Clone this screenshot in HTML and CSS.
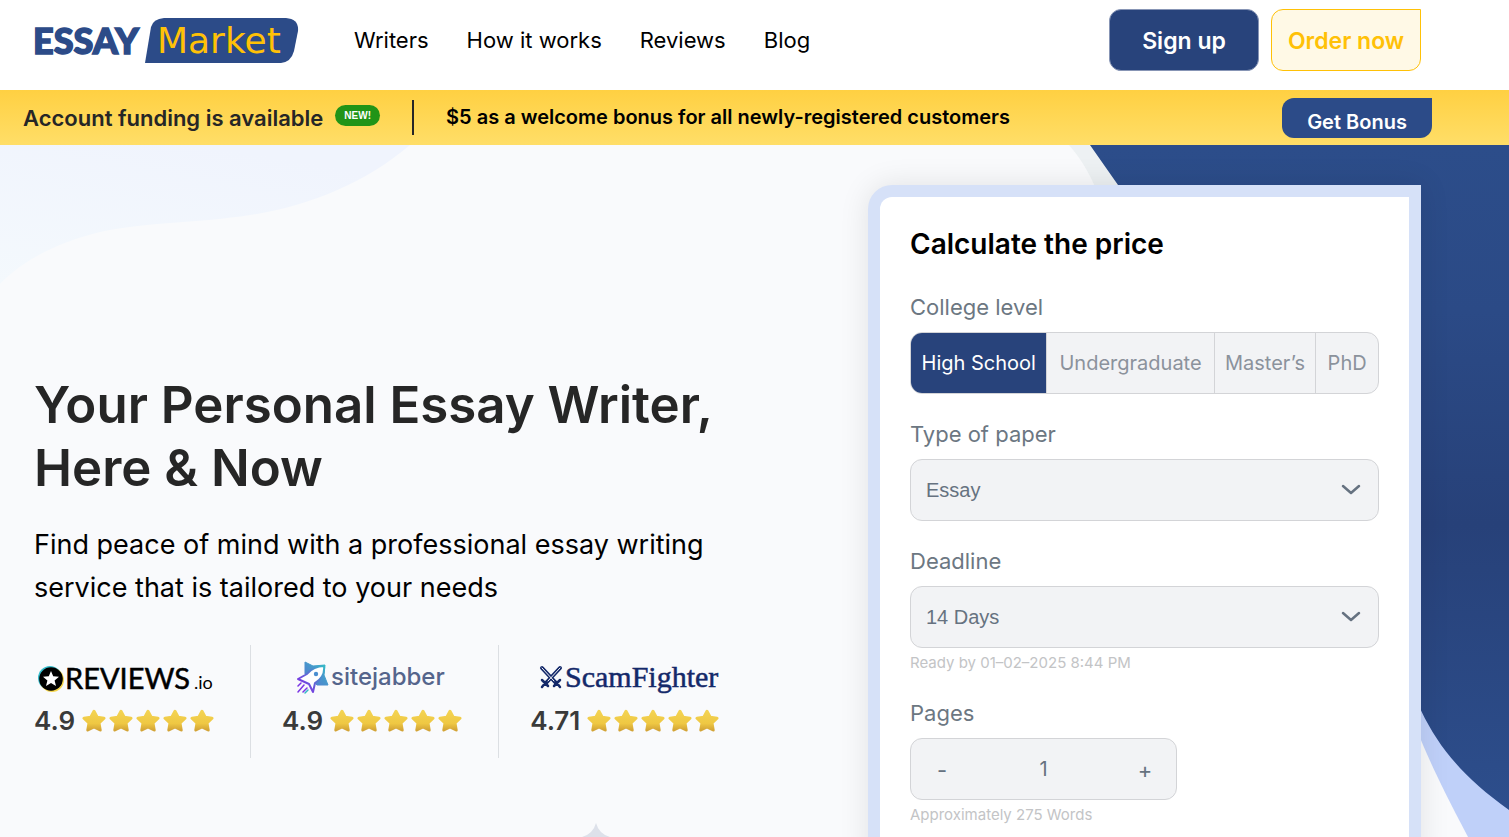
FILE: index.html
```html
<!DOCTYPE html>
<html lang="en">
<head>
    <meta charset="UTF-8">
    <meta name="viewport" content="width=device-width, initial-scale=1.0">
    <title>Essay Market</title>
    <link rel="stylesheet" href="styles.css">
</head>
<body>
    <svg class="symbols" aria-hidden="true">
        <defs>
            <linearGradient id="star-fill" x1="0" y1="0" x2="0" y2="1">
                <stop offset="0" stop-color="#f3d352"/>
                <stop offset="0.65" stop-color="#efc843"/>
                <stop offset="1" stop-color="#d3a437"/>
            </linearGradient>
        </defs>
        <symbol id="star" viewBox="0 0 24 24">
            <path d="M12 2.2l3.200 6 6.800 1-5 4.800 1.200 7-6.200-3-6.200 3 1.200-7L2 9.200l6.800-1z" fill="url(#star-fill)" stroke="url(#star-fill)" stroke-width="3" stroke-linejoin="round"/>
        </symbol>
    </svg>

    <header class="header">
        <a class="logo" href="#" aria-label="Essay Market">
            <svg width="264" height="46" viewBox="0 0 264 46">
                <path d="M130 1H252Q265 2 264 14L260 34Q257 45 247 46H111L117 10Q119 2 130 1Z" fill="#2c4b88"/>
                <text class="logo-essay" x="-1" y="37">ESSAY</text>
                <text class="logo-market" x="123" y="36">Market</text>
            </svg>
        </a>
        <nav class="nav">
            <a href="#">Writers</a>
            <a href="#">How it works</a>
            <a href="#">Reviews</a>
            <a href="#">Blog</a>
        </nav>
        <div class="header-buttons">
            <button class="btn btn-signup">Sign up</button>
            <button class="btn btn-order">Order now</button>
        </div>
    </header>

    <div class="bonus-bar">
        <a class="funding" href="#">Account funding is available</a>
        <span class="new-badge">NEW!</span>
        <p class="bonus-text">$5 as a welcome bonus for all newly-registered customers</p>
        <button class="btn-bonus">Get Bonus</button>
    </div>

    <main class="hero">
        <!-- background waves -->
        <svg class="wave wave-left" width="420" height="140" viewBox="0 0 420 140" aria-hidden="true">
            <defs>
                <linearGradient id="wave-fill" x1="0" y1="1" x2="0.5" y2="0">
                    <stop offset="0" stop-color="#f4f9fd"/>
                    <stop offset="1" stop-color="#f0f4fd"/>
                </linearGradient>
            </defs>
            <path d="M0 0H410C365 38 310 61 250 70C200 78 145 77 100 87C60 97 25 113 0 139Z" fill="url(#wave-fill)"/>
        </svg>
        <svg class="wave wave-right" width="441" height="692" viewBox="0 0 441 692" aria-hidden="true">
            <defs>
                <linearGradient id="blob-fill" x1="0" y1="0" x2="0" y2="1">
                    <stop offset="0" stop-color="#2c4d8a"/>
                    <stop offset="0.25" stop-color="#2b4a86"/>
                    <stop offset="0.57" stop-color="#274179"/>
                    <stop offset="1" stop-color="#2d4e8c"/>
                </linearGradient>
            </defs>
            <path d="M1 0C18 20 25 35 34 60H70L30 0Z" fill="#edf1f3"/>
            <path d="M340 560C350 590 362 620 400 692H441V600Z" fill="#bfd0f9"/>
            <path d="M22 0L50 40L330 500C350 574 375 618 441 665V0Z" fill="url(#blob-fill)"/>
        </svg>
        <svg class="wave sparkle" width="28" height="28" viewBox="0 0 28 28" aria-hidden="true">
            <path d="M14 0Q17 11 28 14Q17 17 14 28Q11 17 0 14Q11 11 14 0Z" fill="#dde1ea"/>
        </svg>

        <section class="intro">
            <h1>Your Personal Essay Writer, Here &amp; Now</h1>
            <p class="lead">Find peace of mind with a professional essay writing service that is tailored to your needs</p>
            <div class="ratings">
                <div class="rating">
                    <a class="rating-logo" href="#" aria-label="REVIEWS.io">
                        <svg width="176" height="34" viewBox="0 0 176 34">
                            <circle cx="12" cy="17" r="12" fill="#35bccb"/>
                            <circle cx="14" cy="19" r="12" fill="#f5d54a"/>
                            <circle cx="13" cy="18" r="11.800" fill="#000"/>
                            <path d="M13 10l2.200 5.300 5.800.4-4.400 3.700 1.400 5.600-5-3.100-5 3.100 1.400-5.600L5 15.700l5.800-.4z" fill="#fff"/>
                            <text class="reviews-name" x="27" y="28">REVIEWS</text>
                            <text class="reviews-io" x="156" y="28">.io</text>
                        </svg>
                    </a>
                    <div class="score">
                        <span>4.9</span>
                        <div class="stars">
                            <svg><use href="#star"/></svg><svg><use href="#star"/></svg><svg><use href="#star"/></svg><svg><use href="#star"/></svg><svg><use href="#star"/></svg>
                        </div>
                    </div>
                </div>
                <div class="rating">
                    <a class="rating-logo" href="#" aria-label="sitejabber">
                        <svg width="150" height="34" viewBox="0 0 150 34">
                            <defs>
                                <linearGradient id="jab-star" x1="1" y1="0" x2="0" y2="1">
                                    <stop offset="0" stop-color="#35b9c6"/>
                                    <stop offset="1" stop-color="#5a72d2"/>
                                </linearGradient>
                                <linearGradient id="jab-rocket" x1="1" y1="0" x2="0.2" y2="0.8">
                                    <stop offset="0" stop-color="#35b9c6"/>
                                    <stop offset="0.55" stop-color="#5a72d2"/>
                                    <stop offset="1" stop-color="#7b35e4"/>
                                </linearGradient>
                            </defs>
                            <path d="M8 1L16 5L28 4L27 14L31 24L20 24L8 13Z" fill="url(#jab-star)" stroke="url(#jab-star)" stroke-linejoin="round"/>
                            <path d="M27 5C28 13 23 19 18 22L16 31L12 23L1 18L10 13C14 8 20 5 27 5Z" fill="#fff" stroke="url(#jab-rocket)" stroke-width="2" stroke-linejoin="round"/>
                            <circle cx="19" cy="13" r="2.200" fill="#4b8fd0"/>
                            <path d="M4 22L1 25M7 24L1 31M10 27L6 31" stroke="#7b35e4" stroke-width="1.500" stroke-linecap="round"/>
                            <path d="M11 29L8 32" stroke="#35b9c6" stroke-width="1.500" stroke-linecap="round"/>
                            <text class="sitejabber-name" x="34" y="24">sitejabber</text>
                        </svg>
                    </a>
                    <div class="score">
                        <span>4.9</span>
                        <div class="stars">
                            <svg><use href="#star"/></svg><svg><use href="#star"/></svg><svg><use href="#star"/></svg><svg><use href="#star"/></svg><svg><use href="#star"/></svg>
                        </div>
                    </div>
                </div>
                <div class="rating">
                    <a class="rating-logo" href="#" aria-label="ScamFighter">
                        <svg width="180" height="34" viewBox="0 0 180 34">
                            <g fill="none" stroke="#14296a" stroke-linecap="round">
                                <path d="M3 7L17 22M21 7L7 22" stroke-width="4"/>
                                <path d="M3 7L15 20M21 7L9 20" stroke="#f9fafc" stroke-width="1"/>
                                <path d="M3 19L9 25M21 19L15 25M7 21L3 26M17 21L21 26" stroke-width="2.500"/>
                            </g>
                            <text class="scamfighter-name" x="26" y="26">ScamFighter</text>
                        </svg>
                    </a>
                    <div class="score">
                        <span>4.71</span>
                        <div class="stars">
                            <svg><use href="#star"/></svg><svg><use href="#star"/></svg><svg><use href="#star"/></svg><svg><use href="#star"/></svg><svg><use href="#star"/></svg>
                        </div>
                    </div>
                </div>
            </div>
        </section>

        <form class="calculator">
            <h2>Calculate the price</h2>

            <fieldset class="field">
                <legend>College level</legend>
                <div class="levels">
                    <input type="radio" name="level" id="level-school" checked>
                    <label for="level-school">High School</label>
                    <input type="radio" name="level" id="level-under">
                    <label for="level-under">Undergraduate</label>
                    <input type="radio" name="level" id="level-master">
                    <label for="level-master">Master’s</label>
                    <input type="radio" name="level" id="level-phd">
                    <label for="level-phd">PhD</label>
                </div>
            </fieldset>

            <div class="field">
                <label class="field-label" for="paper">Type of paper</label>
                <div class="select-wrap">
                    <select id="paper">
                        <option>Essay</option>
                    </select>
                    <svg class="chevron" width="20" height="12" viewBox="0 0 20 12"><path d="M2 2L10 9L18 2"/></svg>
                </div>
            </div>

            <div class="field">
                <label class="field-label" for="deadline">Deadline</label>
                <div class="select-wrap">
                    <select id="deadline">
                        <option>14 Days</option>
                    </select>
                    <svg class="chevron" width="20" height="12" viewBox="0 0 20 12"><path d="M2 2L10 9L18 2"/></svg>
                </div>
                <p class="note">Ready by 01–02–2025 8:44 PM</p>
            </div>

            <div class="field">
                <label class="field-label" for="pages">Pages</label>
                <div class="stepper">
                    <button type="button" id="minus">-</button>
                    <input type="text" id="pages" value="1">
                    <button type="button" id="plus">+</button>
                </div>
                <p class="note" id="words">Approximately 275 Words</p>
            </div>
        </form>
    </main>

    <script>
        const pagesInput = document.getElementById("pages");
        const wordsNote = document.getElementById("words");

        function setPages(count) {
            const pages = Math.max(1, count || 1);
            pagesInput.value = pages;
            wordsNote.textContent = `Approximately ${pages * 275} Words`;
        }

        document.getElementById("minus").addEventListener("click", () => setPages(parseInt(pagesInput.value, 10) - 1));
        document.getElementById("plus").addEventListener("click", () => setPages(parseInt(pagesInput.value, 10) + 1));
        pagesInput.addEventListener("change", () => setPages(parseInt(pagesInput.value, 10)));
    </script>
</body>
</html>
```
FILE: styles.css
```css
* {
    box-sizing: border-box;
}
body {
    margin: 0;
    min-height: 100vh;
    display: flex;
    flex-direction: column;
    font-family: Inter, "Open Sans", sans-serif;
    color: #000;
    background: #fff;
}
a {
    color: inherit;
    text-decoration: none;
}
button, input, select {
    font-family: inherit;
}
button {
    cursor: pointer;
}
h1, h2, p {
    margin: 0;
}
.symbols {
    position: absolute;
    width: 0;
    height: 0;
}

/* header */
.header {
    display: flex;
    align-items: center;
    height: 90px;
    padding: 0 88px 10px 34px;
}
.logo svg {
    display: block;
    overflow: visible;
}
.logo-essay {
    font: 900 36px Lato, sans-serif;
    fill: #2c4b88;
    stroke: #2c4b88;
    stroke-width: 1.5;
}
.logo-market {
    font: 36px "DejaVu Sans", sans-serif;
    fill: #ffc107;
}
.nav {
    display: flex;
    gap: 38px;
    margin-left: 56px;
    font-size: 22px;
}
.header-buttons {
    display: flex;
    gap: 12px;
    margin-left: auto;
}
.btn {
    width: 150px;
    height: 62px;
    padding: 2px 0 0;
    border: 1px solid #8795b5;
    border-radius: 12px;
    font-size: 23px;
    font-weight: 600;
}
.btn-signup {
    background: #28437b;
    color: #fff;
}
.btn-order {
    border-color: #ffc107;
    border-top-right-radius: 0;
    background: #fff9e6;
    color: #ffc107;
}

/* yellow bar */
.bonus-bar {
    display: flex;
    align-items: center;
    height: 55px;
    padding: 0 77px 0 23px;
    background: linear-gradient(#ffd042, #ffde68);
}
.funding {
    color: #262626;
    font-size: 22px;
    font-weight: 600;
}
.new-badge {
    margin: 0 32px 4px 12px;
    padding: 0 9px;
    border-radius: 11px;
    background: #219417;
    color: #fff;
    font: bold 10px/21px "Liberation Sans", sans-serif;
}
.bonus-text {
    padding-left: 32px;
    border-left: 2px solid #262626;
    font-size: 20px;
    font-weight: 600;
    line-height: 35px;
}
.btn-bonus {
    width: 150px;
    height: 40px;
    margin-left: auto;
    padding: 8px 0 0;
    border: none;
    border-radius: 12px 0 12px 12px;
    background: #2c4b88;
    color: #fff;
    font-size: 20px;
    font-weight: 600;
}

/* hero */
.hero {
    position: relative;
    flex: 1;
    display: flex;
    justify-content: space-between;
    padding: 40px 88px 0 34px;
    overflow: hidden;
    background: #f9fafc;
}
.wave {
    position: absolute;
    top: 0;
}
.wave-left {
    left: 0;
}
.wave-right {
    right: 0;
}
.sparkle {
    top: 678px;
    left: 582px;
}
.intro {
    position: relative;
    width: 700px;
    padding-top: 188px;
}
.intro h1 {
    color: #262626;
    font-size: 51px;
    font-weight: 600;
    line-height: 63px;
}
.lead {
    margin-top: 24px;
    font-size: 27px;
    line-height: 43px;
}
.ratings {
    display: flex;
    margin-top: 36px;
}
.rating {
    display: flex;
    flex-direction: column;
    gap: 10px;
    height: 113px;
    padding: 16px 36px 0 31px;
    border-right: 1px solid #dcdfe3;
}
.rating:first-child {
    padding-left: 0;
}
.rating:last-child {
    padding-right: 0;
    border-right: none;
}
.rating-logo {
    align-self: flex-end;
}
.rating:nth-child(2) .rating-logo {
    align-self: center;
}
.rating-logo svg {
    display: block;
}
.reviews-name {
    font: 29px Lato, sans-serif;
    stroke: #000;
    stroke-width: 0.5;
}
.reviews-io {
    font: 18px Lato, sans-serif;
}
.sitejabber-name {
    font: 500 24px Inter, sans-serif;
    fill: #55658c;
}
.scamfighter-name {
    font: 30px "Liberation Serif", serif;
    fill: #14296a;
    stroke: #14296a;
    stroke-width: 0.5;
}
.score {
    display: flex;
    align-items: center;
    gap: 7px;
    color: #3a3a3a;
    font-size: 26px;
    font-weight: 600;
    line-height: 32px;
}
.stars {
    display: flex;
    gap: 3px;
}
.stars svg {
    width: 24px;
    height: 24px;
}

/* calculator */
.calculator {
    position: relative;
    width: 553px;
    padding: 30px 30px 10px;
    border: 12px solid #d6e1f8;
    border-bottom: none;
    border-radius: 24px 0 0 0;
    background: #fff;
    box-shadow: 0 0 30px rgba(0, 0, 0, 0.1);
}
.calculator h2 {
    margin-bottom: 33px;
    font-size: 28px;
    font-weight: 600;
    line-height: 34px;
}
.field {
    margin: 0 0 27px;
    padding: 0;
    border: none;
}
.field legend, .field-label {
    display: block;
    margin-bottom: 12px;
    padding: 0;
    color: #6c7782;
    font-size: 22px;
    line-height: 26px;
}
.levels {
    position: relative;
    display: grid;
    grid-template-columns: 136fr 168fr 102fr 63fr;
    height: 62px;
    border: 1px solid #d3d4d7;
    border-radius: 12px;
    overflow: hidden;
    background: #f2f3f5;
}
.levels input {
    position: absolute;
    opacity: 0;
}
.levels label {
    display: flex;
    align-items: center;
    justify-content: center;
    border-left: 1px solid #d3d4d7;
    color: #8b929c;
    font-size: 20px;
    cursor: pointer;
}
.levels label:first-of-type {
    border-left: none;
}
.levels input:checked + label {
    background: #28437b;
    color: #fff;
}
.select-wrap {
    position: relative;
}
.select-wrap select {
    display: block;
    width: 100%;
    height: 62px;
    padding: 0 15px;
    border: 1px solid #d3d4d7;
    border-radius: 12px;
    appearance: none;
    background: #f2f3f5;
    color: #667280;
    font-size: 20px;
    font-family: "Liberation Sans", sans-serif;
}
.chevron {
    position: absolute;
    top: 25px;
    right: 18px;
    fill: none;
    stroke: #667280;
    stroke-width: 2.5;
    stroke-linecap: round;
    stroke-linejoin: round;
    pointer-events: none;
}
.note {
    margin-top: 5px;
    color: #c3c4c6;
    font-size: 15px;
    line-height: 20px;
}
.stepper {
    display: flex;
    width: 267px;
    height: 62px;
    border: 1px solid #d3d4d7;
    border-radius: 12px;
    background: #f2f3f5;
}
.stepper button {
    width: 62px;
    padding: 2px 0 0;
    border: none;
    background: none;
    color: #667280;
    font-size: 22px;
}
.stepper input {
    flex: 1;
    min-width: 0;
    padding: 0;
    border: none;
    background: none;
    color: #667280;
    font-size: 20px;
    text-align: center;
}
```
